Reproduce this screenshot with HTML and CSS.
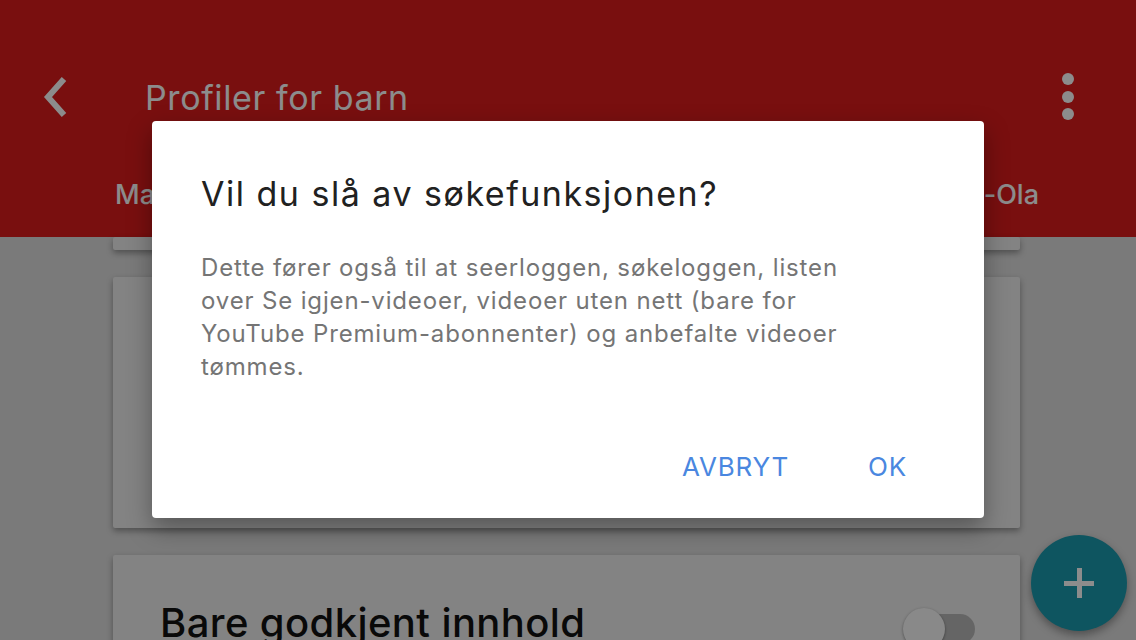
FILE: index.html
```html
<!DOCTYPE html>
<html>
<head>
	<meta charset="utf-8">
	<title>Profiler for barn</title>
	<link rel="stylesheet" href="styles.css">
</head>
<body>
	<div class="screen">
		<div class="header">
			<div class="topbar">
				<svg class="back" width="40" height="48" viewBox="0 0 40 48">
					<polyline points="24,6 8,24 24,42" fill="none" stroke="#fff" stroke-width="6"/>
				</svg>
				<h1 class="title">Profiler for barn</h1>
				<svg class="more" width="14" height="50" viewBox="0 0 14 50">
					<circle cx="7" cy="7" r="6" fill="#fff"/>
					<circle cx="7" cy="25" r="6" fill="#fff"/>
					<circle cx="7" cy="42" r="6" fill="#fff"/>
				</svg>
			</div>
			<div class="tabs">
				<span class="tab">Maja</span>
				<span class="tab">Jan-Ola</span>
			</div>
		</div>

		<div class="list">
			<div class="card card-top"></div>
			<div class="card card-mid"></div>
			<div class="card card-row">
				<span class="row-text">Bare godkjent innhold</span>
				<span class="switch"><span class="knob"></span></span>
			</div>
		</div>

		<div class="fab"><span class="plus"></span></div>

		<div class="scrim"></div>

		<div class="dialog">
			<h2 class="dlg-title">Vil du slå av søkefunksjonen?</h2>
			<p class="dlg-body">Dette fører også til at seerloggen, søkeloggen, listen over Se igjen-videoer, videoer uten nett (bare for YouTube Premium-abonnenter) og anbefalte videoer tømmes.</p>
			<div class="dlg-actions">
				<span class="btn">AVBRYT</span>
				<span class="btn">OK</span>
			</div>
		</div>
	</div>
</body>
</html>
```

FILE: styles.css
```css
*{
	margin: 0;
	padding: 0;
	box-sizing: border-box;
}
body{
	font-family: Inter, Roboto, "Liberation Sans", Arial, sans-serif;
	background: #dedede;
}
.screen{
	width: 1136px;
	height: 640px;
	position: relative;
	overflow: hidden;
	background: #dedede;
}

/* header */
.header{
	height: 237px;
	background: #dc1c1c;
	padding-top: 60px;
}
.topbar{
	height: 74px;
	display: flex;
	align-items: center;
	padding-left: 40px;
	padding-right: 61px;
}
.back{
	display: block;
}
.title{
	font-size: 34px;
	font-weight: 400;
	letter-spacing: .6px;
	color: #fff;
	margin-left: 65px;
	flex: 1;
}
.more{
	display: block;
}
.tabs{
	display: flex;
	justify-content: space-between;
	padding: 45px 97px 0 115px;
}
.tab{
	font-size: 27px;
	line-height: 32px;
	font-weight: 500;
	color: #fff;
}

/* list */
.list{
	display: flex;
	flex-direction: column;
	gap: 27px;
	margin-left: 113px;
	width: 907px;
}
.card{
	background: #eeeeee;
	box-shadow: 0 3px 6px rgba(0,0,0,.35);
	border-radius: 2px;
}
.card-top{
	height: 13px;
}
.card-mid{
	height: 251px;
}
.card-row{
	height: 120px;
	display: flex;
	align-items: flex-start;
	justify-content: space-between;
	padding: 44px 45px 0 47px;
}
.row-text{
	font-size: 40px;
	line-height: 48px;
	font-weight: 500;
	letter-spacing: .4px;
	color: #111;
}
.switch{
	position: relative;
	width: 66px;
	height: 30px;
	border-radius: 15px;
	background: #b9b9b9;
	margin-top: 15px;
}
.knob{
	position: absolute;
	left: -6px;
	top: -6px;
	width: 42px;
	height: 42px;
	border-radius: 50%;
	background: #fafafa;
	box-shadow: 0 1px 3px rgba(0,0,0,.4);
}

/* fab */
.fab{
	position: absolute;
	left: 1031px;
	top: 535px;
	width: 96px;
	height: 96px;
	border-radius: 50%;
	background: #1b9baf;
	box-shadow: 0 4px 8px rgba(0,0,0,.35);
	display: flex;
	align-items: center;
	justify-content: center;
}
.plus{
	position: relative;
	width: 30px;
	height: 5px;
	background: #fff;
}
.plus::after{
	content: "";
	position: absolute;
	left: 12.5px;
	top: -12.5px;
	width: 5px;
	height: 30px;
	background: #fff;
}

/* dialog */
.scrim{
	position: absolute;
	left: 0;
	top: 0;
	right: 0;
	bottom: 0;
	background: rgba(0,0,0,.45);
}
.dialog{
	position: absolute;
	left: 152px;
	top: 121px;
	width: 832px;
	height: 397px;
	background: #fff;
	border-radius: 4px;
	box-shadow: 0 10px 24px rgba(0,0,0,.35);
	padding: 53px 77px 36px 49px;
	display: flex;
	flex-direction: column;
}
.dlg-title{
	font-size: 34px;
	line-height: 40px;
	font-weight: 400;
	letter-spacing: 1.5px;
	color: #212121;
}
.dlg-body{
	margin-top: 37px;
	max-width: 682px;
	font-size: 24px;
	line-height: 33px;
	letter-spacing: .85px;
	color: #757575;
}
.dlg-actions{
	margin-top: auto;
	display: flex;
	justify-content: flex-end;
	gap: 79px;
}
.btn{
	font-size: 26px;
	line-height: 30px;
	color: #4a87e0;
	letter-spacing: .8px;
}
```
